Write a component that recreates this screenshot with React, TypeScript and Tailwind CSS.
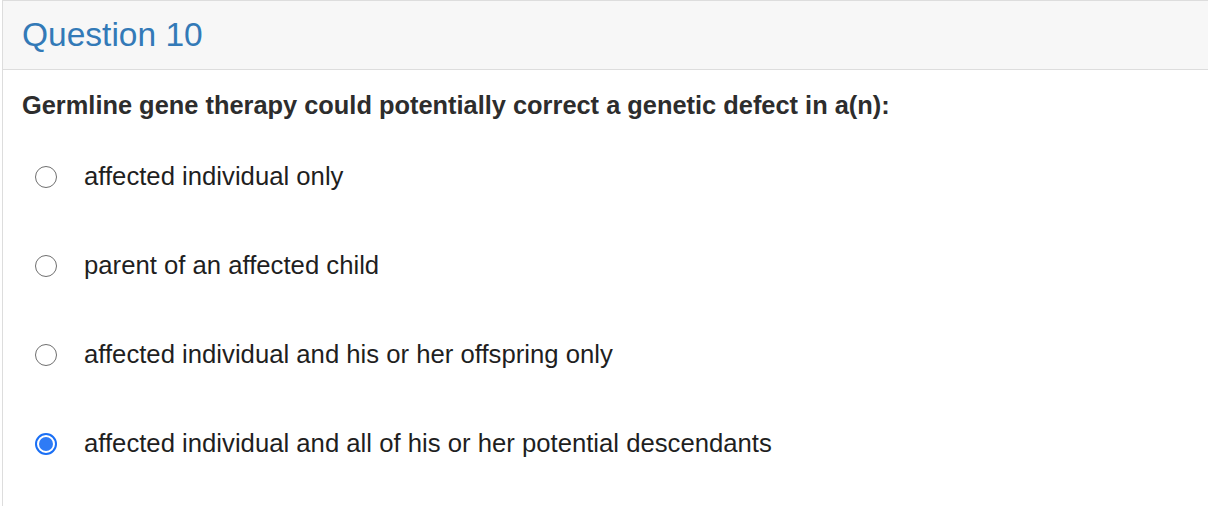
import React, { useState } from 'react';

const options = [
  'affected individual only',
  'parent of an affected child',
  'affected individual and his or her offspring only',
  'affected individual and all of his or her potential descendants',
];

const App: React.FC = () => {
  const [selected, setSelected] = useState<number>(3);

  return (
    <div className="min-h-[506px] bg-white pl-[2px]" style={{ fontFamily: '"Liberation Sans", Arial, sans-serif' }}>
      <div className="min-h-[506px] border-l border-t border-[#dddddd] bg-white">
        <div className="flex h-[69px] items-center border-b border-[#dddddd] bg-[#f7f7f7] px-[19px]">
          <h2 className="text-[33.5px] leading-none text-[#337ab7]">Question 10</h2>
        </div>
        <div className="px-[19px] pt-[21px]">
          <p className="text-[25.4px] font-bold leading-[28px] text-[#2d2d2d]">
            Germline gene therapy could potentially correct a genetic defect in a(n):
          </p>
          <div className="mt-[13px] flex flex-col">
            {options.map((opt, i) => (
              <label key={i} className="flex h-[89px] cursor-pointer items-center" onClick={() => setSelected(i)}>
                <span className="ml-[13px] flex h-[22px] w-[22px] shrink-0 items-center justify-center">
                  {selected === i ? (
                    <span className="flex h-[22px] w-[22px] items-center justify-center rounded-full border-2 border-[#1a6ff5]">
                      <span className="h-[14px] w-[14px] rounded-full bg-[#2e7bf6]" />
                    </span>
                  ) : (
                    <span className="h-[22px] w-[22px] rounded-full border-[1.8px] border-[#6f6f6f] bg-white" />
                  )}
                </span>
                <span className="ml-[27px] text-[25.7px] leading-none text-[#1f1f1f]">{opt}</span>
              </label>
            ))}
          </div>
        </div>
      </div>
    </div>
  );
};

export default App;
